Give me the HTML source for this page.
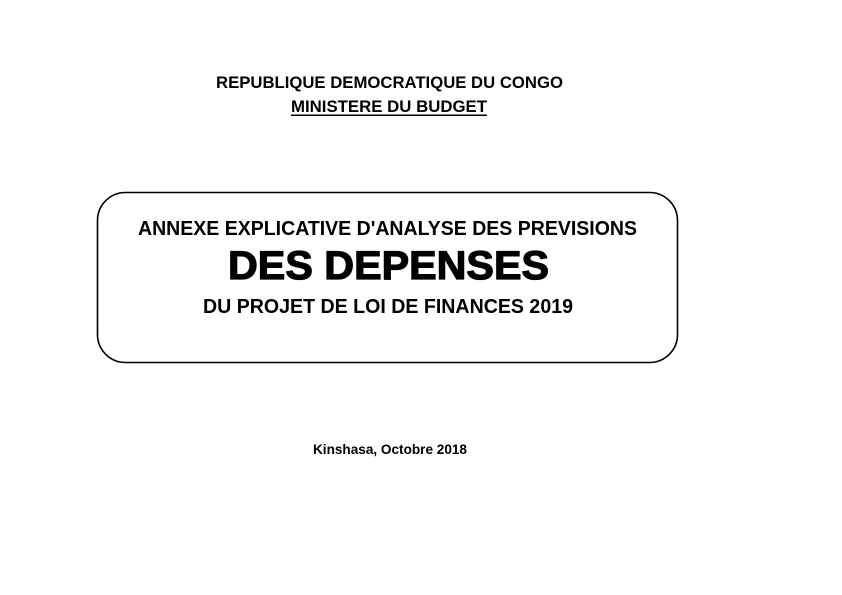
<!DOCTYPE html>
<html><head><meta charset="utf-8"><style>
html,body{margin:0;padding:0;background:#fff;width:842px;height:595px;overflow:hidden}
svg{display:block}
text{font-family:"Liberation Sans",sans-serif;font-weight:bold;fill:#000}
</style></head><body>
<svg width="842" height="595" viewBox="0 0 842 595">
<text x="216" y="88" font-size="16.5" textLength="347" lengthAdjust="spacingAndGlyphs">REPUBLIQUE DEMOCRATIQUE DU CONGO</text>
<text x="291" y="112" font-size="16.5" textLength="196" lengthAdjust="spacingAndGlyphs">MINISTERE DU BUDGET</text>
<rect x="291" y="114.5" width="196" height="1.5" fill="#000"/>
<rect x="97.5" y="192.5" width="580" height="170" rx="28" ry="28" fill="none" stroke="#000" stroke-width="1.6"/>
<text x="138" y="235" font-size="20" textLength="499" lengthAdjust="spacingAndGlyphs">ANNEXE EXPLICATIVE D'ANALYSE DES PREVISIONS</text>
<text x="228" y="279" font-size="40" textLength="321" lengthAdjust="spacingAndGlyphs" stroke="#000" stroke-width="1.2">DES DEPENSES</text>
<text x="203" y="313" font-size="20" textLength="370" lengthAdjust="spacingAndGlyphs">DU PROJET DE LOI DE FINANCES 2019</text>
<text x="313" y="454" font-size="14" textLength="154" lengthAdjust="spacingAndGlyphs">Kinshasa, Octobre 2018</text>
</svg>
</body></html>
